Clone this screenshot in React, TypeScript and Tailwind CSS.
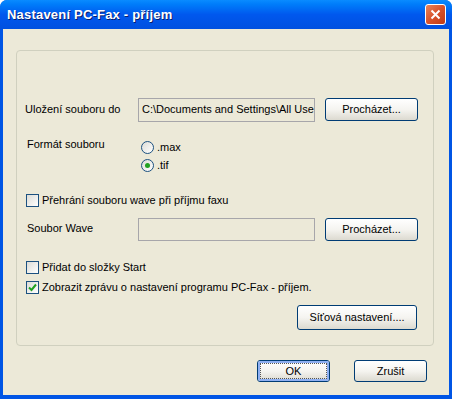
import React from "react";

const font = { fontFamily: '"Liberation Sans", Arial, sans-serif' };

const XpButton = ({ label, w, h = 23, isDefault = false }: { label: string; w: number; h?: number; isDefault?: boolean }) => (
  <div
    className="rounded-[3px] border border-[#003C74] bg-gradient-to-b from-[#FFFFFF] via-[#F5F4F0] to-[#DCDAD0] flex items-center justify-center text-[11px] text-black"
    style={{ width: w, height: h }}
  >
    {isDefault ? (
      <div className="w-full h-full rounded-[2px] border-2 border-[#8FB0F2] flex items-center justify-center">
        <div className="w-full h-full border border-dotted border-[#555] flex items-center justify-center">{label}</div>
      </div>
    ) : (
      label
    )}
  </div>
);

const Checkbox = ({ checked = false }: { checked?: boolean }) => (
  <div className="w-[13px] h-[13px] border border-[#1C5180] bg-gradient-to-br from-[#DCDCD7] to-[#FFFFFF] flex items-center justify-center shrink-0">
    {checked && (
      <svg width="9" height="9" viewBox="0 0 9 9">
        <path d="M1 4.5 L3.5 7 L8 1.5" stroke="#21A121" strokeWidth="2" fill="none" />
      </svg>
    )}
  </div>
);

const Radio = ({ checked = false }: { checked?: boolean }) => (
  <div className="w-[13px] h-[13px] rounded-full border border-[#1C5180] bg-gradient-to-br from-[#DCDCD7] to-[#FFFFFF] flex items-center justify-center shrink-0">
    {checked && <div className="w-[5px] h-[5px] rounded-full bg-[#21A121]" />}
  </div>
);

const Field = ({ text = "", h }: { text?: string; h: number }) => (
  <div
    className="w-[177px] border border-[#A7A6AA] bg-[#ECE9D8] flex items-center px-[3px] overflow-hidden whitespace-nowrap text-[11px] text-black"
    style={{ height: h }}
  >
    {text}
  </div>
);

export default function App() {
  return (
    <div className="w-[452px] h-[399px] bg-[#0055E5] flex flex-col rounded-t-[7px] overflow-hidden" style={font}>
      {/* TITLE BAR */}
      <div className="h-[29px] shrink-0 bg-gradient-to-b from-[#0A8BFF] via-[#0058EE] to-[#0050E0] flex items-center justify-between pl-[7px] pr-[6px]">
        <span className="text-white font-bold text-[13px] tracking-[0.2px] [text-shadow:1px_1px_#0A1E6E]">
          Nastavení PC-Fax - příjem
        </span>
        <div className="w-[21px] h-[21px] rounded-[3px] border border-white bg-gradient-to-br from-[#E8845A] via-[#D8522B] to-[#C03A14] flex items-center justify-center">
          <svg width="11" height="11" viewBox="0 0 11 11">
            <path d="M1.5 1.5 L9.5 9.5 M9.5 1.5 L1.5 9.5" stroke="white" strokeWidth="2" />
          </svg>
        </div>
      </div>

      {/* CLIENT AREA */}
      <div className="flex-1 mx-[3px] mb-[4px] bg-[#ECE9D8] flex flex-col text-[11px] text-black">
        {/* GROUP BOX */}
        <div className="ml-[13px] mt-[21px] w-[418px] h-[296px] border border-[#D0D0BF] rounded-[4px] flex flex-col">
          {/* Uložení souboru do */}
          <div className="mt-[47px] h-[23px] flex items-center">
            <span className="ml-[8px] w-[113px]">Uložení souboru do</span>
            <Field text="C:\Documents and Settings\All Use" h={24} />
            <div className="ml-[10px]">
              <XpButton label="Procházet..." w={93} />
            </div>
          </div>

          {/* Formát souboru */}
          <div className="mt-[17px] flex">
            <span className="ml-[10px] w-[114px] leading-[13px]">Formát souboru</span>
            <div className="flex flex-col">
              <div className="h-[18px] flex items-center gap-[3px]">
                <Radio />
                <span>.max</span>
              </div>
              <div className="h-[18px] flex items-center gap-[3px]">
                <Radio checked />
                <span>.tif</span>
              </div>
            </div>
          </div>

          {/* Přehrání souboru wave */}
          <div className="mt-[20px] h-[13px] flex items-center gap-[3px] ml-[9px]">
            <Checkbox />
            <span>Přehrání souboru wave při příjmu faxu</span>
          </div>

          {/* Soubor Wave */}
          <div className="mt-[11px] h-[23px] flex items-start">
            <span className="ml-[10px] w-[111px] mt-[2px]">Soubor Wave</span>
            <Field h={23} />
            <div className="ml-[10px]">
              <XpButton label="Procházet..." w={93} />
            </div>
          </div>

          {/* Přidat do složky Start */}
          <div className="mt-[20px] h-[13px] flex items-center gap-[3px] ml-[9px]">
            <Checkbox />
            <span>Přidat do složky Start</span>
          </div>

          {/* Zobrazit zprávu */}
          <div className="mt-[7px] h-[13px] flex items-center gap-[3px] ml-[9px]">
            <Checkbox checked />
            <span>Zobrazit zprávu o nastavení programu PC-Fax - příjem.</span>
          </div>

          {/* Síťová nastavení */}
          <div className="mt-[11px] flex justify-end pr-[16px]">
            <XpButton label="Síťová nastavení...." w={120} h={25} />
          </div>
        </div>

        {/* DIALOG BUTTONS */}
        <div className="mt-[14px] flex justify-end gap-[24px] pr-[22px]">
          <XpButton label="OK" w={73} h={22} isDefault />
          <XpButton label="Zrušit" w={73} h={22} />
        </div>
      </div>
    </div>
  );
}
